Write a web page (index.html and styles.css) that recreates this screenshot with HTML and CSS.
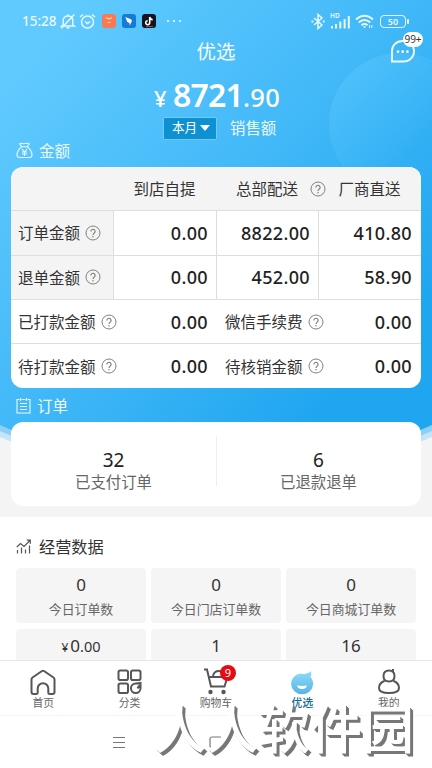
FILE: index.html
```html
<!DOCTYPE html>
<html lang="zh-CN">
<head>
<meta charset="utf-8">
<meta name="viewport" content="width=device-width, initial-scale=1">
<title>优选</title>
<link rel="stylesheet" href="styles.css">
</head>
<body>
<svg width="0" height="0" class="defs">
  <symbol id="help" viewBox="0 0 16 16"><circle cx="8" cy="8" r="7" fill="none" stroke="#808080"/><path d="M5.900 6.500a2.100 2.100 0 1 1 3.300 1.600C8.400 8.700 8 9 8 10" fill="none" stroke="#777" stroke-width="1.100"/><circle cx="8" cy="11.800" r=".7" fill="#777"/></symbol>
</svg>
<div class="screen">
  <main class="content">
    <svg class="hero-bg" viewBox="0 0 432 460" preserveAspectRatio="none">
      <defs><linearGradient id="sky" gradientUnits="userSpaceOnUse" x1="0" y1="90" x2="330" y2="400"><stop offset="0" stop-color="#60cafe"/><stop offset=".5" stop-color="#43b9f8"/><stop offset="1" stop-color="#20a6f0"/></linearGradient>
      <linearGradient id="orb" x1="0" y1="0" x2="1" y2="1"><stop offset="0" stop-color="#65d0ff" stop-opacity=".42"/><stop offset=".65" stop-color="#65d0ff" stop-opacity="0"/></linearGradient></defs>
      <path d="M0 0H432V437Q216 530 0 437Z" fill="#c5e5f7"/>
      <path d="M0 0H432V431Q216 525 0 431Z" fill="#8dd0f6"/>
      <path d="M0 0H432V425Q216 525 0 425Z" fill="url(#sky)"/>
      <circle cx="400" cy="124" r="71" fill="url(#orb)"/>
    </svg>
    <header class="status">
      <span class="clock">15:28</span>
      <svg class="st-icon" width="16" height="17" viewBox="0 0 16 17" fill="none" stroke="#e9f9ff" stroke-width="1.400"><path d="M3.200 12V7.500C3.200 4.700 5 3 8 3s4.800 1.700 4.800 4.500V12l1.500 1H1.700zM6.500 14.800h3M8 1.200V3M14.300 1.500L1.200 15.500"/></svg>
      <svg class="st-icon alarm" width="17" height="17" viewBox="0 0 17 17" fill="none" stroke="#e9f9ff" stroke-width="1.500"><circle cx="8.500" cy="9" r="6"/><path d="M1 4l3-2.500M16 4l-3-2.500M6 8.500l2.500 2L11 8.500"/></svg>
      <svg class="app a1" width="14" height="14" viewBox="0 0 14 14"><rect width="14" height="14" rx="3" fill="#fb7950"/><path d="M4 3.300q3 3 6 0M5.500 8.500h3" fill="none" stroke="#ffd5bd" stroke-width="1.200"/></svg>
      <svg class="app a2" width="14" height="14" viewBox="0 0 14 14"><rect width="14" height="14" rx="3" fill="#147bd8"/><path d="M3.300 3l5.500 2.300q2 1.200.6 3L7.700 11.500 7.500 9 5.300 8z" fill="#fff"/></svg>
      <svg class="app a3" width="14" height="14" viewBox="0 0 14 14"><rect width="14" height="14" rx="3" fill="#17131c"/><path d="M7.700 3v5.500a2 2 0 1 1-2-1.800M7.700 3q.5 2.500 3 2.700" fill="none" stroke="#fff" stroke-width="1.600"/><path d="M4 12.600h7" stroke="#9c543e"/></svg>
      <svg class="more" width="16" height="4" viewBox="0 0 16 4" fill="#e9f9ff"><circle cx="2" cy="2" r="1.100"/><circle cx="8" cy="2" r="1.100"/><circle cx="14" cy="2" r="1.100"/></svg>
      <svg class="bt" width="14" height="17" viewBox="0 0 14 17" fill="none" stroke="#e9f9ff" stroke-width="1.500"><path d="M3 5l8 7-4 3.500V1.500L11 5l-8 7"/><path d="M.5 8.500h1.800M11.800 8.500h1.800" stroke-width="2"/></svg>
      <span class="signal"><small>HD</small><svg width="21" height="14" viewBox="0 0 21 14" fill="#e9f9ff"><path d="M1 11h2v2.500H1zM5 9h2v4.500H5zM9.300 6.500h2v7h-2zM13.600 4h2v9.500h-2zM17.800 1h2v12.500h-2z"/></svg></span>
      <svg class="wifi" width="19" height="15" viewBox="0 0 19 15" fill="none" stroke="#e9f9ff" stroke-width="1.900"><path d="M1 5.500q8.500-7.500 17 0M3.700 8.500q5.800-5 11.600 0M6.500 11.200q3-2.400 6 0"/><circle cx="9.500" cy="13" r="1" fill="#e9f9ff" stroke="none"/><path d="M14.500 11v3M16.800 11v3" stroke-width="1"/></svg>
      <span class="battery">50</span>
    </header>
    <div class="title">优选
      <span class="chat"><svg width="26" height="26" viewBox="0 0 26 26" fill="none" stroke="#f4fcff" stroke-width="1.800"><path d="M2 23.500V13A10.500 9.800 0 0 1 12.500 3h1A10.500 9.800 0 0 1 24 13v.5a10.500 10 0 0 1-10.500 10z"/><g fill="#fff" stroke="none"><circle cx="8" cy="13.700" r="1.400"/><circle cx="12.700" cy="13.700" r="1.400"/><circle cx="17.400" cy="13.700" r="1.400"/></g></svg><b class="chat-badge">99+</b></span>
    </div>
    <div class="amount"><span class="yen">¥</span><span class="int">8721</span><span class="dec">.90</span></div>
    <div class="period"><span class="select">本月<i class="caret"></i></span><span>销售额</span></div>

    <h2 class="section money"><svg width="17" height="17" viewBox="0 0 17 17" fill="none" stroke="#e9f9ff" stroke-width="1.100"><path d="M5.700 4.700L3.500 1.700q2.500-1 4.200 0 2.500-1 5.500 0L11.300 4.700M5.700 4.700h5.600c2.500 2 4.700 5 4.700 8.300q0 2.500-2.500 2.500h-10Q1 15.500 1 13c0-3.300 2.200-6.300 4.700-8.300zM6 7l2.500 3L11 7M6 10h5M6 12h5M8.500 10v4"/></svg>金额</h2>
    <section class="table">
      <div class="row head"><span></span><span>到店自提</span><span>总部配送<svg class="help"><use href="#help"/></svg></span><span>厂商直送</span></div>
      <div class="row cells"><span class="label">订单金额<svg class="help"><use href="#help"/></svg></span><b>0.00</b><b>8822.00</b><b>410.80</b></div>
      <div class="row cells"><span class="label">退单金额<svg class="help"><use href="#help"/></svg></span><b>0.00</b><b>452.00</b><b>58.90</b></div>
      <div class="row pairs"><p><span class="label">已打款金额<svg class="help"><use href="#help"/></svg></span><b>0.00</b></p><p><span class="label">微信手续费<svg class="help"><use href="#help"/></svg></span><b>0.00</b></p></div>
      <div class="row pairs"><p><span class="label">待打款金额<svg class="help"><use href="#help"/></svg></span><b>0.00</b></p><p><span class="label">待核销金额<svg class="help"><use href="#help"/></svg></span><b>0.00</b></p></div>
    </section>

    <h2 class="section order"><svg width="15" height="17" viewBox="0 0 15 17" fill="none" stroke="#e9f9ff" stroke-width="1.100"><path d="M3.500 2.500H1v13.500h13V2.500h-2.500M5.500 2.500h4M4.500 1v3M10.500 1v3M4 6.500h7M4 9.500h7M4 12.500h7"/></svg>订单</h2>
    <section class="orders">
      <div><strong>32</strong><span>已支付订单</span></div>
      <div><strong>6</strong><span>已退款退单</span></div>
    </section>

    <section class="business">
      <h3><svg width="16" height="15" viewBox="0 0 16 15" fill="none" stroke="#555" stroke-width="1.200"><path d="M.8 8L4.500 4.500 8 7.500 14 1.500M10.800 1.200h3.500v3.500M1.500 11v3.500M5.500 8.500v6M9.500 10.500v4M13.500 6.500v8"/></svg>经营数据</h3>
      <div class="stats">
        <div><strong>0</strong><span>今日订单数</span></div>
        <div><strong>0</strong><span>今日门店订单数</span></div>
        <div><strong>0</strong><span>今日商城订单数</span></div>
        <div><strong><small class="cur">¥</small>0<small>.00</small></strong></div>
        <div><strong>1</strong></div>
        <div><strong>16</strong></div>
      </div>
    </section>
  </main>

  <nav class="tabs">
    <a><svg width="28" height="28" viewBox="0 0 28 28" fill="none" stroke="#565656" stroke-width="2"><path d="M4.500 26Q2.500 26 2.500 24V11.500q0-1.300 1-2L13 3q1-.6 2 0l9.500 6.500q1 .7 1 2V24q0 2-2 2h-2.700q-1.500 0-1.500-1.500V20.500a5.300 5.300 0 0 0-10.600 0v4Q8.700 26 7.200 26z"/></svg>首页</a>
    <a><svg width="28" height="28" viewBox="0 0 28 28" fill="none" stroke="#565656" stroke-width="2"><rect x="2.500" y="2.500" width="9.500" height="9.500" rx="1.800"/><rect x="15" y="2.500" width="9.500" height="9.500" rx="1.800"/><rect x="2.500" y="15.500" width="9.500" height="9.500" rx="1.800"/><path d="M24.500 15v5.300a4.800 4.800 0 1 1-4.800-4.800q3 0 4.800-.5zM21.500 20.500l1.800-3"/></svg>分类</a>
    <a><svg width="28" height="28" viewBox="0 0 28 28" fill="none" stroke="#565656" stroke-width="2"><path d="M2 1.500h3l4 17h13.500L25.500 9M6.500 9H21M11 8q1-5 6-5 4 0 5 5"/><g fill="#565656" stroke="none"><circle cx="8.500" cy="24" r="2.200"/><circle cx="21.500" cy="24" r="2.200"/></g></svg>购物车<b class="cart-badge">9</b></a>
    <a class="active"><svg width="28" height="28" viewBox="0 0 28 28"><defs><linearGradient id="drop" x1="0" y1="0" x2="0" y2="1"><stop offset="0" stop-color="#91dafa"/><stop offset="1" stop-color="#56b5e4"/></linearGradient></defs><path d="M12 5.500q4 1.200 8.500-.8 2.500-.8 2.500-1.700.8 4-.5 6 3 3 2.500 8a11 10.500 0 1 1-13-11.500z" fill="url(#drop)"/><path d="M9 17.500q5 .8 10 0-1 3.500-5 3.500t-5-3.500z" fill="#fff"/></svg>优选</a>
    <a><svg width="28" height="28" viewBox="0 0 28 28" fill="none" stroke="#565656" stroke-width="2"><path d="M18 1v3M14 2.500q5.500 0 5.500 5.500T14 13.500 8.500 8 14 2.500zM9.500 13Q4 15 4 20q0 5 10 5t10-5q0-5-5.500-7"/></svg>我的</a>
  </nav>
  <footer class="system">
    <svg width="14" height="13" viewBox="0 0 14 13" stroke="#777" stroke-width="1.200"><path d="M1 1.500h12M1 6.500h12M1 11.500h12"/></svg>
    <svg width="14" height="13" viewBox="0 0 14 13" fill="none" stroke="#777" stroke-width="1.200"><rect x="1" y="1" width="12" height="11" rx="2"/></svg>
    <div class="watermark">人人软件园</div>
  </footer>
</div>
</body>
</html>
```

FILE: styles.css
```css
* { box-sizing: border-box; }
body, h2, h3, p { margin: 0; }
body {
  font-family: "Noto Sans", "Noto Sans CJK SC", sans-serif;
  color: #333;
  background: #fff;
}
svg { display: block; flex: none; }
.defs { position: absolute; }
.screen { width: 432px; height: 768px; display: flex; flex-direction: column; overflow: hidden; }
.content { position: relative; z-index: 0; height: 660px; overflow: hidden; background: #f4f4f4; }
.hero-bg { position: absolute; z-index: -1; top: 0; left: 0; width: 432px; height: 460px; }

.status { height: 40px; padding: 2px 26px 0 22px; display: flex; align-items: center; color: #e9f9ff; }
.clock { width: 37px; font-weight: 500; font-size: 13.500px; line-height: 20px; letter-spacing: 0; white-space: nowrap; }
.st-icon { margin-left: 1px; }
.alarm { margin-left: 3px; }
.app { margin-left: 6px; }
.more { margin-left: 10px; }
.bt { margin-left: 129px; }
.signal { position: relative; margin-left: 5px; display: flex; align-items: flex-end; height: 16px; }
.signal small { position: absolute; left: 0; top: -1px; font-weight: 600; font-size: 6.500px; line-height: 8px; }
.wifi { margin-left: 4px; }
.battery { position: relative; margin-left: 6px; width: 26px; height: 13px; border: 1.500px solid #e9f9ff; border-radius: 4px; font-weight: 600; font-size: 9px; line-height: 11px; text-align: center; }
.battery::after { content: ""; position: absolute; right: -4px; top: 3px; width: 2px; height: 5px; background: #e9f9ff; border-radius: 1px; }

.title { position: relative; height: 24px; text-align: center; font-size: 19.500px; line-height: 24px; color: #f4fcff; }
.chat { position: absolute; left: 390px; top: -2px; }
.chat-badge { position: absolute; left: 13px; top: -6px; width: 20px; height: 15px; border-radius: 8px; background: #fff; color: #333; font-weight: 400; font-size: 10px; line-height: 15px; text-align: center; }
.amount { height: 52px; padding: 11px 0 0 154px; display: flex; align-items: baseline; line-height: 40px; color: #fff; white-space: nowrap; }
.yen { width: 19px; font-size: 22px; font-weight: 500; }
.int { font-size: 32px; font-weight: 600; letter-spacing: -.8px; width: 70px; }
.dec { font-size: 25.500px; font-weight: 500; letter-spacing: .4px; }
.period { height: 24px; padding-left: 163px; display: flex; align-items: center; gap: 13px; font-size: 15.400px; color: #effaff; }
.period > span:last-child { margin-top: -2px; }
.select { width: 54px; height: 23px; padding-left: 8px; border: 1px solid #72c8ed; border-radius: 2px; background: #0d91d3; display: flex; align-items: center; gap: 3px; font-size: 12.600px; line-height: 20px; color: #fff; white-space: nowrap; }
.caret { border: 5px solid transparent; border-top: 6px solid #fff; border-bottom: 0; }

.section { display: flex; align-items: center; font-size: 15.600px; font-weight: 400; color: #effaff; padding-left: 16px; }
.money { height: 27px; padding-bottom: 6px; gap: 6px; }
.order { height: 34px; gap: 6px; }
.table { margin: 0 11px; height: 221px; border-radius: 12px; background: #fff; overflow: hidden; display: grid; grid-template-rows: 44px 44.500px 44.500px 44px 44px; }
.row { display: grid; grid-template-columns: 102px 103px 102px 102px; font-size: 15.500px; border-bottom: 1px solid #dedede; white-space: nowrap; }
.row:last-child { border-bottom: 0; }
.row > span, .row b, .pairs p { display: flex; align-items: center; }
.head { background: #f4f4f4; }
.head > span { justify-content: center; }
.head > span:nth-child(3) { justify-content: flex-start; padding-left: 20px; gap: 12px; }
.head > span:nth-child(4) { padding-left: 1px; }
.help { width: 16px; height: 16px; }
.label { display: flex; align-items: center; gap: 5px; padding-left: 7px; }
.cells > .label { background: #f4f4f4; }
.cells > b { border-left: 1px solid #dedede; justify-content: flex-end; padding-right: 8px; }
.row b { font-weight: 500; font-size: 18px; letter-spacing: .35px; color: #222; }
.pairs { grid-template-columns: 205px 204px; }
.pairs p { justify-content: space-between; padding-right: 8px; }
.pairs p + p .label { padding-left: 9px; }

.orders { margin: 0 11px; height: 84px; border-radius: 12px; background: #fff; display: grid; grid-template-columns: 1fr 1fr; }
.orders > div { display: flex; flex-direction: column; align-items: center; padding-top: 27px; }
.orders > div + div { background: linear-gradient(#eee, #eee) left 14px / 1px 50px no-repeat; }
.orders strong { font-size: 19px; font-weight: 400; line-height: 23px; color: #222; }
.orders span { font-size: 15.400px; line-height: 22px; color: #666; }

.business { margin-top: 11px; height: 160px; padding: 16px 16px 0; background: #fff; }
.business h3 { display: flex; align-items: center; gap: 7px; height: 26px; font-size: 16.200px; font-weight: 400; }
.stats { margin-top: 9px; display: grid; grid-template-columns: repeat(3, 1fr); gap: 6px 5px; }
.stats > div { height: 54.500px; border-radius: 4px; background: #f5f5f5; display: flex; flex-direction: column; align-items: center; padding-top: 6px; }
.stats strong { font-size: 17px; font-weight: 400; line-height: 21px; color: #333; }
.stats strong small { font-size: 14.500px; }
.stats strong .cur { font-size: 12px; margin-right: 2px; }
.stats span { margin-top: 4px; font-size: 12.900px; line-height: 20px; color: #666; white-space: nowrap; }

.tabs { height: 56px; border-top: 1px solid #e8e8e8; border-bottom: 1px solid #f4f4f4; display: grid; grid-template-columns: repeat(5, 1fr); background: #fff; }
.tabs a { position: relative; display: flex; flex-direction: column; align-items: center; padding-top: 7px; font-size: 10.800px; line-height: 14px; color: #666; }
.tabs .active { color: #176b91; font-weight: 500; }
.cart-badge { position: absolute; left: 47px; top: 4px; width: 16px; height: 16px; border-radius: 50%; background: #e60b13; color: #fff; font-weight: 400; font-size: 11px; line-height: 16px; text-align: center; }
.system { position: relative; height: 52px; padding: 20px 0 0 112px; display: flex; gap: 83px; background: #fff; }
.watermark { position: absolute; left: 154px; top: -19px; font: 500 52px/60px "Noto Sans CJK SC", sans-serif; color: #fff; text-shadow: 1px 1px 0 #777, 2px 2px 0 #777, 3px 3px 0 #777; white-space: nowrap; }
```
